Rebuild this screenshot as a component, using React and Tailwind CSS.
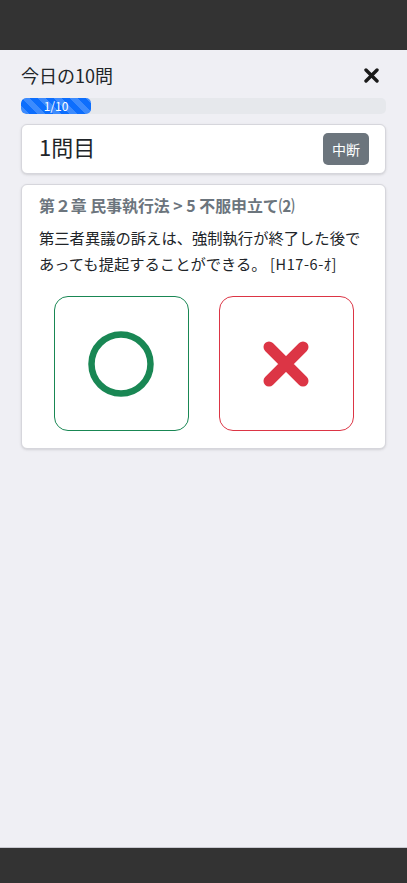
const font = { fontFamily: '"Noto Sans CJK JP", "Noto Sans", sans-serif' };

export default function App() {
  return (
    <div className="w-[407px] h-[883px] flex flex-col bg-[#efeff4]" style={font}>
      <div className="h-[50px] bg-[#333333]" />
      <div className="flex-1 px-[21px] pt-[12px]">
        <div className="flex items-center justify-between h-[26px]">
          <h1 className="text-[18px] text-[#212529] leading-[26px]">今日の10問</h1>
          <svg width="15" height="15" viewBox="0 0 15 15" className="mr-[7px]">
            <path d="M2 2 L13 13 M13 2 L2 13" stroke="#1a1a1a" strokeWidth="3.4" strokeLinecap="round" />
          </svg>
        </div>

        <div className="mt-[10px] h-4 rounded-[5px] bg-[#e6e8ec] overflow-hidden">
          <div className="h-full w-[70px] rounded-[5px] bg-[#0d6efd] bg-[linear-gradient(45deg,rgba(255,255,255,.2)_25%,transparent_25%,transparent_50%,rgba(255,255,255,.2)_50%,rgba(255,255,255,.2)_75%,transparent_75%,transparent)] bg-[length:16px_16px] flex items-center justify-center text-white text-[12px] leading-none">
            1/10
          </div>
        </div>

        <div className="mt-[10px] h-[50px] bg-white border border-[#d6d6dc] rounded-[6px] shadow-sm flex items-center justify-between pl-[17px] pr-[16px]">
          <span className="text-[22px] text-[#212529] leading-[30px] mb-[6px]">1問目</span>
          <button className="h-[32px] w-[46px] rounded-[5px] bg-[#6c757d] text-white text-[14px]">中断</button>
        </div>

        <div className="mt-[10px] bg-white border border-[#d6d6dc] rounded-[6px] shadow-sm px-[17px] pt-[11px] pb-[17px]">
          <p className="text-[15.9px] font-bold text-[#6c757d] leading-[20px]">第２章 民事執行法 &gt; 5 不服申立て⑵</p>
          <p className="mt-[8px] text-[15.3px] text-[#212529] leading-[26px]">
            第三者異議の訴えは、強制執行が終了した後で
            <br />
            あっても提起することができる。 <span className="text-[14.5px] tracking-[0.04em]">[H17-6-ｵ]</span>
          </p>
          <div className="mt-[19px] flex justify-center gap-[30px]">
            <button className="w-[135px] h-[135px] rounded-[14px] border border-[#198754] flex items-center justify-center">
              <svg width="68" height="68" viewBox="0 0 68 68">
                <circle cx="34" cy="34" r="29.5" fill="none" stroke="#198754" strokeWidth="6.5" />
              </svg>
            </button>
            <button className="w-[135px] h-[135px] rounded-[14px] border border-[#dc3545] flex items-center justify-center">
              <svg width="48" height="48" viewBox="0 0 48 48">
                <path d="M7 7 L41 41 M41 7 L7 41" stroke="#dc3545" strokeWidth="11" strokeLinecap="round" />
              </svg>
            </button>
          </div>
        </div>
      </div>
      <div className="h-[36px] bg-[#333333] border-t border-[#c8c8cf]" />
    </div>
  );
}
